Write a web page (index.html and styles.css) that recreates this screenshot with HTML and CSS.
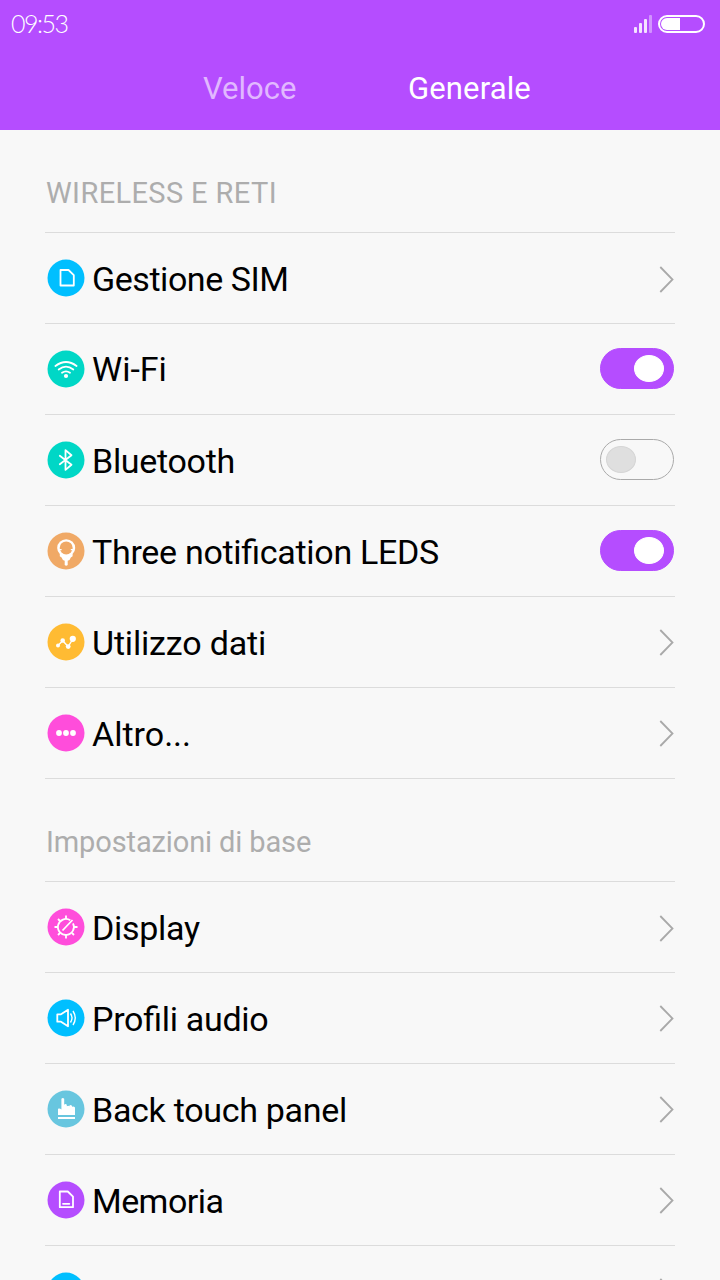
FILE: index.html
```html
<!DOCTYPE html>
<html lang="it">
<head>
<meta charset="utf-8">
<title>Impostazioni</title>
<link rel="stylesheet" href="styles.css">
</head>
<body>
<svg class="defs" aria-hidden="true">
  <symbol id="arrow" viewBox="0 0 16 27"><path d="M1.300 1 13.500 13.500 1.300 26" fill="none" stroke="#a9a9a9" stroke-width="1.800"/></symbol>
</svg>
<header class="header">
  <div class="status">
    <span class="time">09:53</span>
    <svg class="indicators" width="72" height="18" viewBox="0 0 72 18">
      <g fill="#fff"><rect y="12" width="3" height="6" rx="1" opacity=".85"/><rect x="5" y="8" width="3" height="10" rx="1" opacity=".85"/><rect x="10" y="4" width="3" height="14" rx="1" opacity=".85"/><rect x="15" width="3" height="18" rx="1" opacity=".4"/></g>
      <rect x="25" y="1" width="45" height="16" rx="8" fill="none" stroke="#fff" stroke-width="2"/>
      <path d="M46 3H33a6 6 0 0 0 0 12h13z" fill="#fff"/>
    </svg>
  </div>
  <nav class="tabs"><span class="tab tab-quick">Veloce</span><span class="tab tab-general">Generale</span></nav>
</header>
<main class="content">
  <h2 class="heading heading-first">WIRELESS E RETI</h2>
  <ul class="list">
    <li class="row"><svg class="icon" viewBox="0 0 38 38"><circle cx="19" cy="19" r="18.500" fill="#00bfff"/><path d="M13.500 11h8l5.300 5.200v10.300H13.500z" class="line round"/></svg><span class="label sim">Gestione SIM</span><svg class="arrow low"><use href="#arrow"/></svg></li>
    <li class="row"><svg class="icon" viewBox="0 0 38 38"><circle cx="19" cy="19" r="18.500" fill="#00d7c6"/><path d="M8.400 16q10.600-8 21.200 0M11.700 19.500q7.300-5.600 14.600 0M15 22.700q4-2.800 8 0" class="line round"/><circle cx="19" cy="26" r="2.100" fill="#fff"/></svg><span class="label wifi">Wi-Fi</span><span class="toggle on"></span></li>
    <li class="row"><svg class="icon" viewBox="0 0 38 38"><circle cx="19" cy="19" r="18.500" fill="#00d7c6"/><path d="m12.800 14.700 11.700 9-6 5.200V9.100l6 5.100-11.700 9" class="line round"/></svg><span class="label bt">Bluetooth</span><span class="toggle"></span></li>
    <li class="row"><svg class="icon" viewBox="0 0 38 38"><circle cx="19" cy="19" r="18.500" fill="#f0a966"/><path d="M12.800 22h12.800v2.300l-1.800 1.200-1.300 2.500-1.800.8v4.200q-1.500 1.600-3 0v-4.200l-1.800-.8-1.300-2.500-1.800-1.200z" fill="#fff"/><ellipse cx="19.200" cy="15.900" rx="9" ry="8.700" fill="#fff"/><ellipse cx="19.200" cy="15.900" rx="6.500" ry="6.500" fill="#f0a966"/><path d="M11 17.600h3.600M23.800 17.600h3.600" class="line thin"/></svg><span class="label leds">Three notification LEDS</span><span class="toggle on"></span></li>
    <li class="row"><svg class="icon" viewBox="0 0 38 38"><circle cx="19" cy="19" r="18.500" fill="#ffbb33"/><path d="m11 22.500 4.700-4.700 5.500 5.700 4.600-7.500" class="line thin"/><g fill="#fff"><circle cx="11" cy="22.500" r="2"/><circle cx="15.700" cy="17.500" r="2.300"/><circle cx="21.200" cy="23.600" r="2.400"/><circle cx="25.800" cy="15.800" r="3.100"/></g></svg><span class="label data">Utilizzo dati</span><svg class="arrow"><use href="#arrow"/></svg></li>
    <li class="row"><svg class="icon" viewBox="0 0 38 38"><circle cx="19" cy="19" r="18.500" fill="#ff4ddb"/><g fill="#fff"><circle cx="12" cy="19" r="2.900"/><circle cx="19" cy="19" r="2.900"/><circle cx="26" cy="19" r="2.900"/></g></svg><span class="label other">Altro...</span><svg class="arrow"><use href="#arrow"/></svg></li>
  </ul>
  <h2 class="heading heading-basic">Impostazioni di base</h2>
  <ul class="list">
    <li class="row"><svg class="icon" viewBox="0 0 38 38"><circle cx="19" cy="19" r="18.500" fill="#ff4ddb"/><path d="M23.300 12.300a8 8 0 1 0 2.700 3" class="line"/><path d="m15.500 22.500 10-10.500M19 7.500v3.500M19 27v3.500M7.500 19h3.500M27 19h3.500M11 11l2 2M11 27l2-2M25 25l2 2" class="line"/></svg><span class="label display">Display</span><svg class="arrow low"><use href="#arrow"/></svg></li>
    <li class="row"><svg class="icon" viewBox="0 0 38 38"><circle cx="19" cy="19" r="18.500" fill="#00bfff"/><path d="M10.300 15.300h3.700l7-4.600v16.600l-7-4.600h-3.700z" class="line round"/><path d="M23.500 14.500q3 4.500 0 9M26 12q4.500 7 0 14" class="line thin"/></svg><span class="label audio">Profili audio</span><svg class="arrow"><use href="#arrow"/></svg></li>
    <li class="row"><svg class="icon" viewBox="0 0 38 38"><circle cx="19" cy="19" r="18.500" fill="#68c6df"/><path d="M11 25v-6.200q1.800-1 3.400.7V8.700q1.400-1.600 2.800 0v6q1.400-1.300 2.600 0v1.600q1.400-1.300 2.600 0v-.7q1.500-1.200 2.600.3v.8q1.800-.8 3 .8V25zM11 27h17v2H11z" fill="#fff"/></svg><span class="label back">Back touch panel</span><svg class="arrow"><use href="#arrow"/></svg></li>
    <li class="row"><svg class="icon" viewBox="0 0 38 38"><circle cx="19" cy="19" r="18.500" fill="#b54dff"/><path d="M12.800 10.500h8l5.200 5.200v10.500H12.800zM16 22.800h6.300" class="line round"/></svg><span class="label memory">Memoria</span><svg class="arrow"><use href="#arrow"/></svg></li>
    <li class="row"><svg class="icon" viewBox="0 0 38 38"><circle cx="19" cy="19" r="18.500" fill="#00bfff"/></svg><span class="label battery">Batteria</span><svg class="arrow"><use href="#arrow"/></svg></li>
  </ul>
</main>
</body>
</html>
```
FILE: styles.css
```css
*, *::before { box-sizing: border-box; }
body { margin: 0; height: 1280px; overflow: hidden; background: #f8f8f8; font-family: Roboto, "Liberation Sans", sans-serif; font-feature-settings: "liga" 1; }
.defs { display: none; }
.header { height: 130px; background: #b54dff; color: #fff; }
.status { display: flex; justify-content: space-between; height: 46px; padding: 15px 14px 0 11px; }
.time { font: 300 25px/16px Lato, sans-serif; letter-spacing: -1.500px; }
.indicators { flex: none; }
.tabs { display: flex; padding-left: 203px; font-size: 31px; line-height: 86px; height: 84px; }
.tab-quick { width: 205px; color: #e1b8ff; }
.tab-general { letter-spacing: 0.130px; }
.content { padding: 0 45px; }
.heading { height: 103px; margin: 0; padding: 42px 0 0 1px; border-bottom: 1px solid #dcdcdc; color: #adadad; font-size: 29px; line-height: 42px; font-weight: 400; white-space: nowrap; }
.heading-first { letter-spacing: 0.380px; }
.heading-basic { letter-spacing: -0.120px; }
.list { margin: 0; padding: 0; list-style: none; }
.row { display: flex; align-items: center; height: 91px; border-bottom: 1px solid #dcdcdc; padding: 0 1px 0 2px; }
.icon { width: 38px; height: 38px; flex: none; }
.label { margin-left: 7px; padding-top: 1px; color: #000; font-size: 34px; line-height: 42px; white-space: nowrap; letter-spacing: -0.300px; }
.sim { letter-spacing: -0.450px; }
.wifi { padding: 0 0 1px; letter-spacing: 0; }
.data { letter-spacing: -0.170px; }
.other { letter-spacing: 0; }
.memory { letter-spacing: -0.550px; }
.battery { letter-spacing: -0.150px; }
.arrow { width: 16px; height: 27px; margin: 0 -1px 0 auto; flex: none; }
.arrow.low { margin-bottom: -2px; }
.line { fill: none; stroke: #fff; stroke-width: 1.800; }
.thin { stroke-width: 1.400; }
.round { stroke-linecap: round; stroke-linejoin: round; }
.toggle { width: 74px; height: 41px; margin: 0 0 2px auto; border: 1px solid #aaa; border-radius: 21px; display: flex; align-items: center; padding: 0 5px; flex: none; }
.toggle::before { content: ""; width: 30px; height: 27px; border: 1px solid #d5d5d5; border-radius: 50%; background: #dfdfdf; }
.toggle.on { justify-content: flex-end; padding-right: 9px; background: #b54dff; border-color: #b54dff; }
.toggle.on::before { background: #fff; border-color: #fff; }
```
